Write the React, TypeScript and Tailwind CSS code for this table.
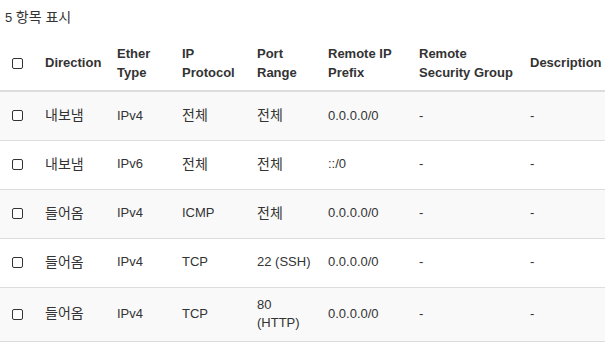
/** 보안 그룹 규칙 테이블 */

interface Rule {
  direction: string;
  etherType: string;
  protocol: string;
  portRange: string;
  prefix: string;
  group: string;
  description: string;
}

const rules: Rule[] = [
  { direction: "내보냄", etherType: "IPv4", protocol: "전체", portRange: "전체", prefix: "0.0.0.0/0", group: "-", description: "-" },
  { direction: "내보냄", etherType: "IPv6", protocol: "전체", portRange: "전체", prefix: "::/0", group: "-", description: "-" },
  { direction: "들어옴", etherType: "IPv4", protocol: "ICMP", portRange: "전체", prefix: "0.0.0.0/0", group: "-", description: "-" },
  { direction: "들어옴", etherType: "IPv4", protocol: "TCP", portRange: "22 (SSH)", prefix: "0.0.0.0/0", group: "-", description: "-" },
  { direction: "들어옴", etherType: "IPv4", protocol: "TCP", portRange: "80 (HTTP)", prefix: "0.0.0.0/0", group: "-", description: "-" },
];

// 한글은 기준 화면에서 조금 더 크게 보임
function Cell({ text }: { text: string }) {
  const isKo = /[가-힣]/.test(text);
  return <span className={isKo ? "text-[14px]" : ""}>{text}</span>;
}

function Checkbox() {
  return <span className="block w-[11px] h-[11px] ml-1 border border-[#333] rounded-[2px] bg-white" />;
}

const th = "px-2 pt-[9px] pb-2 align-middle border-b-2 border-[#ddd]";
const td = "px-2 py-2 align-middle border-b border-[#ddd]";

export default function App() {
  return (
    <div
      className="w-[605px] h-[344px] overflow-hidden bg-white text-[13px] leading-[18.57px] text-[#333]"
      style={{ fontFamily: '"Liberation Sans", Arial, "Noto Sans CJK KR", sans-serif' }}
    >
      <div className="h-[36px] pl-[5px] pt-[8px]">
        5 <span className="text-[14px]">항목 표시</span>
      </div>
      <table className="table-fixed border-collapse w-[640px]">
        <colgroup>
          <col className="w-[37px]" />
          <col className="w-[72px]" />
          <col className="w-[65px]" />
          <col className="w-[75px]" />
          <col className="w-[71px]" />
          <col className="w-[91px]" />
          <col className="w-[111px]" />
          <col className="w-[118px]" />
        </colgroup>
        <thead>
          <tr className="text-left font-bold">
            <th className={th}>
              <Checkbox />
            </th>
            <th className={th}>Direction</th>
            <th className={th}>Ether Type</th>
            <th className={th}>IP Protocol</th>
            <th className={th}>Port Range</th>
            <th className={th}>Remote IP Prefix</th>
            <th className={th}>Remote Security Group</th>
            <th className={th}>Description</th>
          </tr>
        </thead>
        <tbody>
          {rules.map((r, i) => (
            <tr key={i} className={i % 2 === 0 ? "bg-[#f9f9f9]" : "bg-white"}>
              <td className={`${td} h-[49px]`}>
                <Checkbox />
              </td>
              <td className={td}><Cell text={r.direction} /></td>
              <td className={td}>{r.etherType}</td>
              <td className={td}><Cell text={r.protocol} /></td>
              <td className={td}><Cell text={r.portRange} /></td>
              <td className={td}>{r.prefix}</td>
              <td className={td}>{r.group}</td>
              <td className={td}>{r.description}</td>
            </tr>
          ))}
        </tbody>
      </table>
    </div>
  );
}
